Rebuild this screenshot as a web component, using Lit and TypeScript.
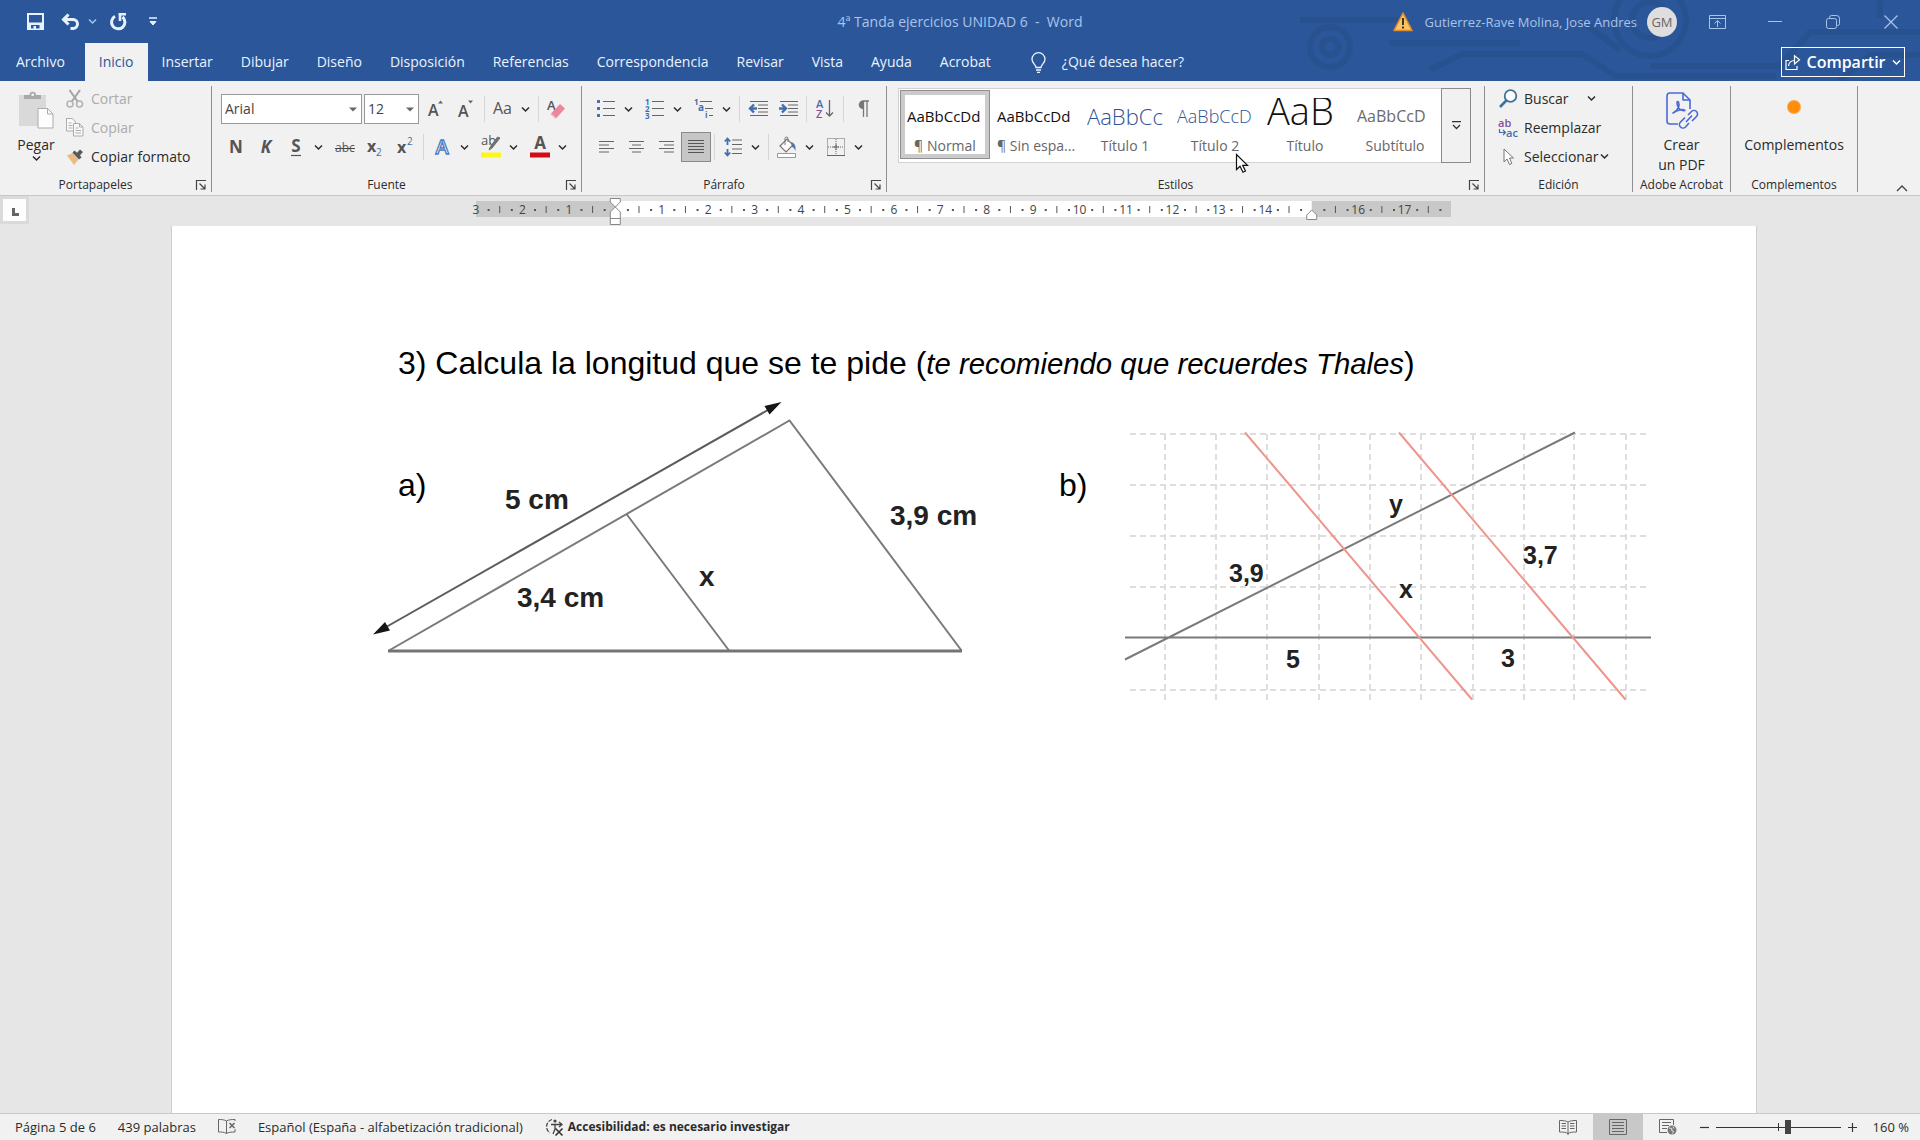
import { LitElement, html, css, svg, nothing, type TemplateResult } from "lit";
import { customElement, property } from "lit/decorators.js";
import { classMap } from "lit/directives/class-map.js";

const CHEVRON = svg`<path d="M1 1.500 4.500 5 8 1.500" fill="none" stroke="currentColor" stroke-width="1.500"/>`;

/** Icon artwork: [width, height, drawing]. */
const ICONS: Record<string, [number, number, unknown]> = {
  chevron: [9, 7, CHEVRON],
  save: [17, 17, svg`<path fill="currentColor" fill-rule="evenodd" d="M0 0h17v17H0zM2 2v7.500h13V2zM4 12v3.500h2.500V13H9v2.500h3.500V12z"/>`],
  undo: [19, 16, svg`<path d="M3 5.500h9a4.500 4.500 0 0 1 0 9H9.500" fill="none" stroke="currentColor" stroke-width="3"/><path d="M7.500.5 2.500 5.500l5 5" fill="none" stroke="currentColor" stroke-width="3"/>`],
  redo: [19, 18, svg`<path d="M6 3.300A6.700 6.700 0 1 0 13.500 4" fill="none" stroke="currentColor" stroke-width="3"/><path d="M9.500 1.200H17M11 0v8" fill="none" stroke="currentColor" stroke-width="2.600"/>`],
  custom: [8, 9, svg`<path d="M0 1h8" stroke="currentColor" stroke-width="1.500"/><path d="M1 4.500h6L4 8z" fill="currentColor" stroke="currentColor"/>`],
  warning: [20, 20, svg`<path d="M10 1 19 18.500H1z" fill="#f6c667" stroke="#e08a2c" stroke-width="1.600" stroke-linejoin="round"/><path d="M10 6v7M10 14.500v2" stroke="#4a3212" stroke-width="2"/>`],
  ribbonOpts: [17, 14, svg`<path d="M.5.5h16v13H.5zM.5 3.500h16M8.500 12V6M5.500 8.500l3-3 3 3" fill="none" stroke="currentColor"/>`],
  minimize: [14, 14, svg`<path d="M0 6.500h14" stroke="currentColor"/>`],
  restore: [14, 14, svg`<rect x=".5" y="3.500" width="10" height="10" rx="2" fill="none" stroke="currentColor"/><path d="M3.500 3V2.500a2 2 0 0 1 2-2h5a3 3 0 0 1 3 3v5a2 2 0 0 1-2 2H11" fill="none" stroke="currentColor"/>`],
  close: [14, 14, svg`<path d="m.5.5 13 13m0-13-13 13" stroke="currentColor" stroke-width="1.200"/>`],
  bulb: [15, 21, svg`<path d="M5 15.500c0-3-4-4-4-8.300a6.500 6.500 0 0 1 13 0c0 4.300-4 5.300-4 8.300zM5 18h5M6 20.300h3" fill="none" stroke="currentColor" stroke-width="1.300"/>`],
  share: [15, 15, svg`<path d="M4 5.500H1v9h11v-3.500M3.500 11c.5-4 2.800-5.500 6-5.500M9.500 2v3L9.500 9l5-4.300L9.500.7z" fill="none" stroke="currentColor" stroke-width="1.200"/>`],
  paste: [36, 40, svg`<path d="M1 5h27v31H1z" fill="#d9d9d9"/><path d="M6 9V5h5.500a3.200 3.200 0 0 1 6.500 0H23v4z" fill="#a9a9a9"/><circle cx="14.700" cy="4.800" r="1.400" fill="#f1f1f1"/><path d="M20 18.500h9.500l5.500 5.500v14H20z" fill="#fdfdfd" stroke="#ababab"/><path d="M29.500 18.500V24H35" fill="none" stroke="#ababab"/>`],
  cut: [18, 18, svg`<path d="M3.500 0 12 12M14 0 5.500 12" stroke="#a3a3a3" stroke-width="2"/><circle cx="4" cy="14" r="3" fill="none" stroke="#b4b4b4" stroke-width="1.600"/><circle cx="13.500" cy="14" r="3" fill="none" stroke="#b4b4b4" stroke-width="1.600"/>`],
  copy: [18, 19, svg`<path d="M.5.500h6L9.500 4v9h-9z" fill="#fafafa" stroke="#ababab"/><path d="M2.500 5h3m-3 2.500h4m-4 2.500h4" stroke="#ababab"/><path d="M7.500 5.500h6l3.500 3.500v9H7.500z" fill="#fafafa" stroke="#ababab"/><path d="M13.500 5.500V9H17M9.500 10h3m-3 2.500h5.500M9.500 15H15" fill="none" stroke="#ababab"/>`],
  painter: [18, 18, svg`<path d="m1 7.500 6-2.500 5.500 6.500L8 17z" fill="#e9bd82"/><path d="m6.500 4.500 2-2 2.500 2.300L14 1.500 17 4l-3 3.200 1.500 2.300-2.500 2z" fill="#595959"/>`],
  grow: [18, 18, svg`<text x="1" y="16" class="t16 bold">A</text><path d="m11 3.500 2.500-3 2.500 3z" fill="#666"/>`],
  shrink: [18, 18, svg`<text x="1" y="17" class="t16 bold">A</text><path d="m11 .5 2.500 3 2.500-3z" fill="#666"/>`],
  case: [20, 18, svg`<text x="0" y="14" class="t16">Aa</text>`],
  clear: [20, 22, svg`<text x="0" y="12" class="t13 bold">A</text><path d="m4 15.500 9-9.500 5 4.500-9 10z" fill="#e9879b"/><path d="m3.700 16 5 4.500" stroke="#f6c1cb" stroke-width="1.500"/>`],
  boldN: [18, 18, svg`<text x="9" y="15" text-anchor="middle" class="t17 heavy">N</text>`],
  italicK: [18, 18, svg`<text x="9" y="15" text-anchor="middle" class="t17 heavy slant">K</text>`],
  underS: [18, 20, svg`<text x="9" y="15" text-anchor="middle" class="t17 heavy">S</text><path d="M4 18.500h10" stroke="#555" stroke-width="1.200"/>`],
  strike: [22, 18, svg`<text x="11" y="14" text-anchor="middle" class="t12">abc</text><path d="M1 10.500h20" stroke="#444"/>`],
  sub: [20, 20, svg`<text x="2" y="15" class="t16 heavy">x</text><text x="11" y="19" class="t10 blue">2</text>`],
  sup: [20, 20, svg`<text x="2" y="16" class="t16 heavy">x</text><text x="12" y="8" class="t10 blue">2</text>`],
  effects: [20, 20, svg`<text x="10" y="17" text-anchor="middle" class="outline">A</text>`],
  highlight: [22, 24, svg`<text x="1" y="10" class="t13">ab</text><path d="m20 3-8 10-3 2 1.500-3.500L17.500 2z" fill="#707070" stroke="#707070"/><path d="M1 17.500h20v5H1z" fill="#fbf61c"/>`],
  fontColor: [22, 24, svg`<text x="11" y="14" text-anchor="middle" class="t17 heavy">A</text><path d="M1 17.500h20v5H1z" fill="#d30d17"/>`],
  bullets: [20, 20, svg`<path d="M1 1h3v3H1zM1 8h3v3H1zM1 15h3v3H1z" fill="#4472b4"/><path d="M7 2.500h12M7 9.500h12M7 16.500h12" stroke="#666"/>`],
  numbers: [20, 20, svg`<g class="t8 blue"><text x="0" y="6">1</text><text x="0" y="13">2</text><text x="0" y="20">3</text></g><path d="M7 2.500h12M7 9.500h12M7 16.500h12" stroke="#666"/>`],
  multilevel: [20, 20, svg`<g class="t8 blue"><text x="0" y="6">1</text><text x="4" y="12" class="t10">a</text><text x="11" y="19">i</text></g><path d="M6 2.500h12M11 9.500h8M15 16.500h4" stroke="#666"/>`],
  outdent: [19, 18, svg`<path d="M1 1.500h18M9 5h10M9 8.500h10M9 12h10M1 15.500h18" stroke="#666"/><path d="M1 8.500h7M5 4.500 1 8.500l4 4" fill="none" stroke="#3f6fb0" stroke-width="2.400"/>`],
  indent: [19, 18, svg`<path d="M1 1.500h18M9 5h10M9 8.500h10M9 12h10M1 15.500h18" stroke="#666"/><path d="M0 8.500h7M3 4.500l4 4-4 4" fill="none" stroke="#3f6fb0" stroke-width="2.400"/>`],
  sort: [18, 20, svg`<text x="0" y="9" class="t11 bold blue">A</text><text x="0" y="19" class="t11 bold purple">Z</text><path d="M13.500 1v16M10 13.500l3.500 3.500 3.500-3.500" fill="none" stroke="#666" stroke-width="1.300"/>`],
  pilcrow: [13, 18, svg`<path d="M6.500 1H13M7.500 1v16M11 1v16" stroke="#777" stroke-width="1.300"/><path d="M7 .4a4 4 0 0 0 0 8.600z" fill="#777"/>`],
  left: [15, 14, svg`<path d="M0 1.500h15M0 5h10M0 8.500h15M0 12h10" stroke="#666"/>`],
  center: [15, 14, svg`<path d="M0 1.500h15M3 5h9M0 8.500h15M3 12h9" stroke="#666"/>`],
  right: [15, 14, svg`<path d="M0 1.500h15M5 5h10M0 8.500h15M5 12h10" stroke="#666"/>`],
  justify: [16, 14, svg`<path d="M0 .5h16M0 3.500h16M0 6.500h16M0 9.500h16M0 12.500h16" stroke="#555"/>`],
  spacing: [18, 20, svg`<path d="M3.500 2v6M.8 4.500 3.500 1.500l2.700 3M3.500 12v6M.8 15.500l2.700 3 2.700-3" fill="none" stroke="#3f6fb0" stroke-width="1.800"/><path d="M8 3h10M8 7.500h10M8 12h10M8 16.500h10" stroke="#666"/>`],
  bucket: [20, 21, svg`<path d="m3 9 7-7 6 6-7 7z" fill="#fdfdfd" stroke="#777" stroke-width="1.200"/><path d="M8 8V1.500a1.500 1.500 0 0 1 3 0V5" fill="none" stroke="#777"/><path d="M14 5c4 1 5 4 4.500 9-1-2.500-2-3.500-3.500-4z" fill="#56789f"/><path d="M.5 16.500h18v4H.5z" fill="#fff" stroke="#999"/>`],
  borders: [18, 18, svg`<path d="M.5.5h17v17H.5zM9 1v16M1 9h16" fill="none" stroke="#666" stroke-dasharray="1 1"/><path d="M9 6v6M6 9h6M0 17.500h18" stroke="#666"/>`],
  search: [19, 19, svg`<circle cx="11.500" cy="7" r="5.800" fill="#fbfdff" stroke="#3e7397" stroke-width="1.800"/><path d="M7.300 11.500 1 18" stroke="#3e7397" stroke-width="2.600"/>`],
  replace: [20, 20, svg`<text x="0" y="9" class="t11 bold purple">ab</text><text x="8" y="19" class="t11 bold blue">ac</text><path d="M1.500 11v3.500H7M5 12l2.500 2.500L5 17" fill="none" stroke="#3f6fb0" stroke-width="1.200"/>`],
  select: [14, 18, svg`<path d="M3 1v13l3-3 2.500 5.500 2.300-1L8.500 10h4z" fill="#fff" stroke="#777"/>`],
  pdf: [32, 38, svg`<g fill="none" stroke="#4a69d6" stroke-width="1.600" stroke-linejoin="round"><path d="M12 32H4a3 3 0 0 1-3-3V4a3 3 0 0 1 3-3h13l7 7v9"/><path d="M17 1v7h7"/><path d="M7 21c5-2 7-8 5.500-11-1.200-1.500-2 .5-1 3.500 1.500 4 4.500 5.500 7.500 5-2-1.800-8-.5-12 2.500z"/><path d="m22 23 3.500-3.500a3.400 3.400 0 0 1 5 5L26 29m-3 2-3.500 4a3.400 3.400 0 0 1-5-5l4.500-4.500m1 4.500 6-6.500"/></g>`],
  dot: [16, 16, svg`<circle cx="8" cy="8" r="7" fill="#f9a94a"/><circle cx="8" cy="8" r="6" fill="#ff8f0a"/>`],
  launcher: [10, 10, svg`<path d="M.5 10V.5H10M3.500 3.500l5 5M9 4.500V9H4.500" fill="none" stroke="#444" stroke-width="1.200"/>`],
  more: [9, 9, svg`<path d="M0 .7h9M1 4l3.500 3.500L8 4" fill="none" stroke="#333" stroke-width="1.300"/>`],
  collapse: [12, 8, svg`<path d="m1 7 5-5 5 5" fill="none" stroke="#444" stroke-width="1.400"/>`],
  tabstop: [7, 8, svg`<path d="M1.500 0v6.500H7" fill="none" stroke="#666" stroke-width="3"/>`],
  proof: [18, 16, svg`<path d="M8.500 14.500V2C6 .5 3 .5.500.500v12.500c3 0 5.500 0 8 1.500zm0 0c2-1.200 4-1.500 8.500-1.500V10M8.500 2C11 .5 14 .5 17 .5V2" fill="none" stroke="#666"/><path d="m11.500 4 5 5m0-5-5 5" stroke="#666" stroke-width="1.500"/>`],
  access: [20, 18, svg`<path d="M7 1.500A7.500 7.500 0 0 0 5 15" fill="none" stroke="#444" stroke-width="1.300" stroke-dasharray="4 1.500"/><circle cx="10" cy="3" r="1.600" fill="#444"/><path d="M6 6.500h11M10 6v5l-2 5M14 4l3 2.500L14 9" fill="none" stroke="#444" stroke-width="1.300"/><path d="m10.500 10.500 7 7m0-7-7 7" stroke="#333" stroke-width="1.600"/>`],
  read: [18, 15, svg`<path d="M9 13.500V2C7 .8 4 .5.500.5V12c4 0 6.500.3 8.500 1.500zm0 0c2-1.200 4.500-1.500 8.500-1.500V.5C14 .5 11 .8 9 2M9 13v2M2.500 3.500H7M2.500 6H7M2.500 8.500H7M11 3.500h4.500M11 6h4.500M11 8.500h4.500" fill="none" stroke="#666"/>`],
  print: [18, 16, svg`<path d="M.5.5h17v15H.5zM3 3.500h12M3 6.500h12M3 9.500h12M3 12.500h12" fill="none" stroke="#666"/>`],
  web: [18, 16, svg`<path d="M8 13.500H.5V.5h14V6M3 3.500h9M3 6.500h7M3 9.500h5" fill="none" stroke="#666"/><circle cx="13" cy="11" r="4.500" fill="#777"/><path d="m10 9 3 .5-.5 2 2 .5-1 2.500M14 7.500l1 2" fill="none" stroke="#ddd"/>`],
  minus: [9, 9, svg`<path d="M0 4.500h9" stroke="#333" stroke-width="1.200"/>`],
  plus: [9, 9, svg`<path d="M0 4.500h9M4.500 0v9" stroke="#333" stroke-width="1.200"/>`],
};

const icon = (name: string): TemplateResult => {
  const [w, h, art] = ICONS[name];
  return html`<svg class="icon" width=${w} height=${h} viewBox="0 0 ${w} ${h}" aria-hidden="true">${art}</svg>`;
};

const base = css`
  :host {
    box-sizing: border-box;
    font-family: "Open Sans", "Noto Sans", sans-serif;
    font-size: 14px;
    line-height: 20px;
    color: #2b2b2b;
  }
  *, *::before, *::after { box-sizing: inherit; }
  button {
    font: inherit;
    color: inherit;
    background: none;
    border: 0;
    padding: 0;
    display: inline-flex;
    align-items: center;
    justify-content: center;
    white-space: nowrap;
  }
  .icon { display: block; flex: none; overflow: visible; }
  svg text { fill: #555; }
  .t8 { font-size: 8px; font-weight: 700; }
  .t10 { font-size: 10px; }
  .t11 { font-size: 11px; }
  .t12 { font-size: 12px; }
  .t13 { font-size: 13px; }
  .t16 { font-size: 16px; }
  .t17 { font-size: 17px; }
  .bold { font-weight: 600; }
  .heavy { font-weight: 700; }
  .slant { font-style: italic; }
  svg text.blue, .blue text { fill: #3f6fb0; }
  svg text.purple { fill: #8250a0; }
  svg text.outline { font-size: 20px; font-weight: 600; fill: #fff; stroke: #4a7dc2; stroke-width: 1.300px; }
`;

@customElement("word-title-bar")
export class WordTitleBar extends LitElement {
  static styles = [base, css`
    :host {
      display: block;
      position: relative;
      background: #2b579a;
      color: #fff;
    }
    .decor { position: absolute; right: 0; top: 0; width: 640px; height: 100%; }
    .decor path, .decor circle { fill: none; stroke: #264c86; stroke-width: 6; opacity: .5; }
    .top {
      position: relative;
      display: grid;
      grid-template-columns: 1fr auto 1fr;
      align-items: center;
      height: 43px;
      color: #a9c4ea;
    }
    .quick { display: flex; align-items: center; padding-left: 17px; color: #e6f3ff; }
    .quick button { height: 32px; width: 34px; }
    .quick .narrow { width: 10px; color: #a9c4ea; margin-right: 4px; }
    .quick .wide { width: 36px; }
    .title { white-space: pre; }
    .account { display: flex; align-items: center; justify-content: flex-end; }
    .user { font-size: 13px; margin: 0 10px 0 12px; }
    .avatar {
      width: 30px;
      height: 30px;
      border-radius: 50%;
      background: #dedede;
      color: #666;
      font-size: 13px;
      margin-right: 11px;
    }
    .win { width: 58px; height: 38px; }
    .tabs { position: relative; display: flex; align-items: center; height: 38px; padding: 0 15px 0 2px; }
    .tab { height: 38px; padding: 0 14px; color: #eaf3ff; }
    .tab.first { padding-right: 20px; }
    .tab.active { background: #f1f1f1; color: #2b579a; }
    .ask { gap: 16px; margin-left: 26px; color: #eaf3ff; }
    .share {
      margin-left: auto;
      width: 124px;
      height: 30px;
      gap: 6px;
      border: 1px solid #fff;
      font-size: 16px;
      font-weight: 600;
    }
  `];

  private tabs = ["Archivo", "Inicio", "Insertar", "Dibujar", "Diseño", "Disposición", "Referencias",
    "Correspondencia", "Revisar", "Vista", "Ayuda", "Acrobat"];

  render() {
    return html`
      <svg class="decor" viewBox="0 0 640 81" preserveAspectRatio="xMaxYMin slice" aria-hidden="true">
        <circle cx="50" cy="47" r="20"/><circle cx="50" cy="47" r="8"/>
        <path d="M20 20h105M110 43h130M150 70l32-16h120l34 22h160M300 20l40 30"/>
        <circle cx="370" cy="20" r="36"/><circle cx="370" cy="20" r="18"/>
        <path d="M370 66h130l30-34h110M560 81l30-26h50M600 0v18"/>
      </svg>
      <div class="top">
        <div class="quick">
          <button class="wide" aria-label="Guardar">${icon("save")}</button>
          <button aria-label="Deshacer">${icon("undo")}</button>
          <button class="narrow" aria-label="Opciones de deshacer">${icon("chevron")}</button>
          <button aria-label="Rehacer">${icon("redo")}</button>
          <button class="wide" aria-label="Personalizar barra">${icon("custom")}</button>
        </div>
        <div class="title">4ª Tanda ejercicios UNIDAD 6  -  Word</div>
        <div class="account">
          ${icon("warning")}
          <span class="user">Gutierrez-Rave Molina, Jose Andres</span>
          <button class="avatar">GM</button>
          <button class="win" aria-label="Opciones de la cinta">${icon("ribbonOpts")}</button>
          <button class="win" aria-label="Minimizar">${icon("minimize")}</button>
          <button class="win" aria-label="Restaurar">${icon("restore")}</button>
          <button class="win" aria-label="Cerrar">${icon("close")}</button>
        </div>
      </div>
      <nav class="tabs">
        ${this.tabs.map((t, i) => html`<button class=${classMap({ tab: true, first: i === 0, active: i === 1 })}>${t}</button>`)}
        <button class="ask">${icon("bulb")}<span>¿Qué desea hacer?</span></button>
        <button class="share">${icon("share")}<span>Compartir</span>${icon("chevron")}</button>
      </nav>`;
  }
}

@customElement("ribbon-group")
export class RibbonGroup extends LitElement {
  @property() label = "";
  @property({ type: Boolean }) launcher = false;

  static styles = [base, css`
    :host {
      display: flex;
      flex-direction: column;
      border-right: 1px solid #8f8f8f;
      min-height: 106px;
    }
    .body { flex: 1; }
    .foot { display: flex; align-items: center; font-size: 12px; line-height: 14px; }
    .label { flex: 1; text-align: center; white-space: nowrap; }
    .launch { width: 20px; height: 14px; }
  `];

  render() {
    return html`
      <div class="body"><slot></slot></div>
      <div class="foot">
        <span class="label">${this.label}</span>
        ${this.launcher ? html`<button class="launch" aria-label="Más opciones de ${this.label}">${icon("launcher")}</button>` : nothing}
      </div>`;
  }
}

interface StyleItem { name: string; sample: string; look: string }

@customElement("word-ribbon")
export class WordRibbon extends LitElement {
  static styles = [base, css`
    :host {
      display: flex;
      background: #f1f1f1;
      border-bottom: 1px solid #c8c8c8;
      padding: 5px 0 3px;
    }
    .g-clip { width: 212px; }
    .g-font { width: 370px; }
    .g-par { width: 305px; }
    .g-styles { flex: 1; min-width: 0; }
    .g-edit { width: 148px; }
    .g-pdf { width: 98px; }
    .g-add { width: 127px; }
    .clip { display: flex; padding: 4px 0 0 12px; gap: 5px; }
    .big { flex-direction: column; justify-content: flex-start; width: 48px; }
    .big .icon { margin-bottom: 5px; }
    .list { display: flex; flex-direction: column; align-items: flex-start; margin-top: -6px; }
    .list button { height: 29px; gap: 6px; }
    .slot { width: 20px; display: flex; justify-content: center; }
    .off { color: #ababab; }
    .tools { display: flex; flex-direction: column; gap: 8px; padding: 8px 0 0 9px; }
    .row { display: flex; align-items: center; height: 30px; }
    .row button { height: 30px; width: 30px; }
    .row button.drop { width: 14px; }
    .row button.on { background: #c6c6c6; border: 1px solid #8a8a8a; }
    .split { display: flex; margin-right: 5px; }
    .split.last { margin-right: 0; }
    .sep { width: 1px; height: 26px; background: #d6d6d6; margin: 0 3px; }
    .sep.far { margin-left: 6px; }
    .combo { display: grid; align-items: center; margin-right: 2px; }
    .combo select, .combo .arrow { grid-area: 1 / 1; }
    .combo select {
      appearance: none;
      font: inherit;
      color: #444;
      height: 30px;
      padding: 0 3px;
      border: 1px solid #9a9a9a;
      border-radius: 0;
      background: #fff;
    }
    .face { width: 141px; }
    .size { width: 55px; }
    .arrow { justify-self: end; margin-right: 5px; pointer-events: none; }
    .gallery { display: flex; margin: 2px 13px 0 11px; height: 75px; }
    .items { display: flex; flex: 1; overflow: hidden; background: #fff; border: 1px solid #d2d2d2; border-right: 0; padding: 1px; }
    .item {
      display: block;
      width: 90px;
      height: 69px;
      padding: 5px 7px 0;
      flex: none;
      color: #666;
      text-align: center;
    }
    .item.sel { box-shadow: inset 0 0 0 1px #8f8f8f, inset 0 0 0 5px #cbcbcb; }
    .item .name { display: block; line-height: 20px; margin-top: 8px; }
    .sample { display: block; height: 30px; overflow: hidden; line-height: 36px; text-align: left; font-size: 15px; color: #111; }
    .sample.h1 { font-size: 22px; font-weight: 300; color: #2f5496; }
    .sample.h2 { font-size: 18px; font-weight: 300; color: #2f5496; }
    .sample.title { font-size: 38px; font-weight: 300; line-height: 24px; }
    .sample.subtitle { font-size: 16px; color: #6a6a6a; }
    .more { width: 30px; border: 1px solid #8a8a8a; }
    .edit { padding: 4px 0 0 13px; }
    .edit .far { margin-left: 12px; }
    .edit .near { margin-left: -4px; }
    .center { display: flex; justify-content: center; padding-top: 6px; }
    .two { line-height: 20px; }
    .dotwrap { height: 38px; display: flex; padding-top: 7px; margin-bottom: 5px; }
    .end { flex: none; width: 62px; display: flex; align-items: flex-end; justify-content: flex-end; padding: 0 12px 0 0; }
  `];

  private styleItems: StyleItem[] = [
    { name: "¶ Normal", sample: "AaBbCcDd", look: "" },
    { name: "¶ Sin espa...", sample: "AaBbCcDd", look: "" },
    { name: "Título 1", sample: "AaBbCc", look: "h1" },
    { name: "Título 2", sample: "AaBbCcD", look: "h2" },
    { name: "Título", sample: "AaB", look: "title" },
    { name: "Subtítulo", sample: "AaBbCcD", look: "subtitle" },
  ];

  private btn(name: string, label: string, on = false) {
    return html`<button class=${classMap({ on })} aria-label=${label}>${icon(name)}</button>`;
  }

  private split(name: string, label: string, last = false) {
    return html`<span class=${classMap({ split: true, last })}>${this.btn(name, label)}<button class="drop" aria-label="Opciones de ${label}">${icon("chevron")}</button></span>`;
  }

  private combo(cls: string, label: string, value: string) {
    return html`<span class="combo"><select class=${cls} aria-label=${label}><option>${value}</option></select>
      <svg class="arrow" width="8" height="5" viewBox="0 0 8 5" aria-hidden="true"><path d="M0 .5h8l-4 4z" fill="#666"/></svg></span>`;
  }

  render() {
    const sep = html`<span class="sep"></span>`;
    const far = html`<span class="sep far"></span>`;
    return html`
      <ribbon-group class="g-clip" label="Portapapeles" launcher>
        <div class="clip">
          <button class="big">${icon("paste")}<span>Pegar</span>${icon("chevron")}</button>
          <div class="list">
            <button class="off"><span class="slot">${icon("cut")}</span>Cortar</button>
            <button class="off"><span class="slot">${icon("copy")}</span>Copiar</button>
            <button><span class="slot">${icon("painter")}</span>Copiar formato</button>
          </div>
        </div>
      </ribbon-group>

      <ribbon-group class="g-font" label="Fuente" launcher>
        <div class="tools">
          <div class="row">
            ${this.combo("face", "Fuente", "Arial")}${this.combo("size", "Tamaño de fuente", "12")}
            ${this.btn("grow", "Aumentar tamaño")}${this.btn("shrink", "Disminuir tamaño")}${sep}
            ${this.split("case", "Cambiar mayúsculas", true)}${far}${this.btn("clear", "Borrar formato")}
          </div>
          <div class="row">
            ${this.btn("boldN", "Negrita")}${this.btn("italicK", "Cursiva")}${this.split("underS", "Subrayado")}
            ${this.btn("strike", "Tachado")}${this.btn("sub", "Subíndice")}${this.btn("sup", "Superíndice")}${sep}
            ${this.split("effects", "Efectos de texto")}${this.split("highlight", "Resaltado")}${this.split("fontColor", "Color de fuente")}
          </div>
        </div>
      </ribbon-group>

      <ribbon-group class="g-par" label="Párrafo" launcher>
        <div class="tools">
          <div class="row">
            ${this.split("bullets", "Viñetas")}${this.split("numbers", "Numeración")}${this.split("multilevel", "Lista multinivel", true)}${far}
            ${this.btn("outdent", "Disminuir sangría")}${this.btn("indent", "Aumentar sangría")}${sep}
            ${this.btn("sort", "Ordenar")}${sep}${this.btn("pilcrow", "Mostrar todo")}
          </div>
          <div class="row">
            ${this.btn("left", "Alinear a la izquierda")}${this.btn("center", "Centrar")}${this.btn("right", "Alinear a la derecha")}
            ${this.btn("justify", "Justificar", true)}${sep}${this.split("spacing", "Interlineado", true)}${far}
            ${this.split("bucket", "Sombreado")}${this.split("borders", "Bordes")}
          </div>
        </div>
      </ribbon-group>

      <ribbon-group class="g-styles" label="Estilos" launcher>
        <div class="gallery">
          <div class="items">
            ${this.styleItems.map((s, i) => html`
              <button class=${classMap({ item: true, sel: i === 0 })}>
                <span class="sample ${s.look}">${s.sample}</span><span class="name">${s.name}</span>
              </button>`)}
          </div>
          <button class="more" aria-label="Más estilos">${icon("more")}</button>
        </div>
      </ribbon-group>

      <ribbon-group class="g-edit" label="Edición">
        <div class="edit list">
          <button><span class="slot">${icon("search")}</span>Buscar<span class="far">${icon("chevron")}</span></button>
          <button><span class="slot">${icon("replace")}</span>Reemplazar</button>
          <button><span class="slot">${icon("select")}</span>Seleccionar<span class="near">${icon("chevron")}</span></button>
        </div>
      </ribbon-group>

      <ribbon-group class="g-pdf" label="Adobe Acrobat">
        <div class="center"><button class="big">${icon("pdf")}<span class="two">Crear<br>un PDF</span></button></div>
      </ribbon-group>

      <ribbon-group class="g-add" label="Complementos">
        <div class="center"><button class="big"><span class="dotwrap">${icon("dot")}</span><span>Complementos</span></button></div>
      </ribbon-group>

      <div class="end"><button aria-label="Contraer la cinta">${icon("collapse")}</button></div>`;
  }
}

@customElement("word-ruler")
export class WordRuler extends LitElement {
  static styles = [base, css`
    :host {
      display: grid;
      grid-template-columns: 1fr minmax(0, 975px) 1fr;
      align-items: start;
      height: 30px;
      background: #e6e6e6;
    }
    .corner { width: 29px; height: 28px; padding: 3px; background: #dadada; }
    .corner button { width: 100%; height: 100%; background: #fdfdfd; padding: 4px 0 0 1px; }
    .scale { display: block; width: 100%; height: 30px; overflow: visible; margin-left: 3px; }
    .scale text { font-size: 12px; fill: #444; }
  `];

  render() {
    const total = 21;
    const origin = 3;
    const pct = (cm: number) => `${(cm / total) * 100}%`;
    const marks: unknown[] = [];
    for (let q = 1; q < total * 4; q++) {
      const cm = q / 4;
      if (q % 4 === 2) marks.push(svg`<rect x=${pct(cm)} y="10" width="1" height="7" fill="#555"/>`);
      else if (q % 4) marks.push(svg`<rect x=${pct(cm)} y="13" width="2" height="2" fill="#555"/>`);
    }
    for (let cm = 0; cm < total; cm++) {
      const n = cm - origin;
      if (n !== 0 && n !== 15) marks.push(svg`<text x=${pct(cm)} y="18" text-anchor="middle">${Math.abs(n)}</text>`);
    }
    return html`
      <div class="corner"><button aria-label="Tipo de tabulación">${icon("tabstop")}</button></div>
      <svg class="scale" role="img" aria-label="Regla horizontal">
        <rect x="0" y="5" width="100%" height="16" fill="#c8c8c8"/>
        <rect x=${pct(origin)} y="5" width=${pct(15)} height="16" fill="#fff"/>
        ${marks}
        <svg x=${pct(origin)} overflow="visible">
          <g fill="#fff" stroke="#888">
            <path d="M-5 2.500H5v3.500l-5 5-5-5zM0 11l5 5v6.500H-5V16zM-5 22.500H5v6H-5z"/>
          </g>
        </svg>
        <svg x=${pct(18)} overflow="visible"><path d="m0 14 5 5v4.500H-5V19z" fill="#fff" stroke="#888"/></svg>
      </svg>
      <span></span>`;
  }
}

@customElement("word-page")
export class WordPage extends LitElement {
  static styles = [base, css`
    :host {
      display: flex;
      justify-content: center;
      flex: 1;
      background: #e6e6e6;
      padding-left: 8px;
    }
    .page {
      width: 100%;
      max-width: 1586px;
      background: #fff;
      border: solid #cfcfcf;
      border-width: 0 1px;
      padding: 119px 104px 0 226px;
      font-family: "Liberation Sans", Arial, sans-serif;
      font-size: 24pt;
      line-height: 37px;
      color: #000;
    }
    h1 { font: inherit; margin: 0; }
    em { font-size: 22pt; }
    .figures { display: grid; grid-template-columns: minmax(0, 661px) minmax(0, 65px) minmax(0, 528px); align-items: start; }
    .tag { margin: 85px 0 0; grid-row: 1; }
    .tag.a { grid-column: 1; }
    .tag.b { grid-column: 2; }
    .fig { display: block; grid-row: 1; width: 100%; height: auto; }
    .fig.a { grid-column: 1; max-width: 606px; margin: 18px 0 0 -25px; }
    .fig.b { grid-column: 3; margin-top: 48px; }
    .fig text { font-weight: 700; fill: #222; }
    .fig.a text { font-size: 28px; }
    .fig.b text { font-size: 25px; }
    .ink { fill: none; stroke: #7a7a7a; stroke-width: 2; }
    .dim { fill: none; stroke: #5c5c5c; stroke-width: 2; }
    .head { fill: #161616; }
    .base { fill: none; stroke: #747474; stroke-width: 3; }
    .grid { fill: none; stroke: #dedede; stroke-width: 2; stroke-dasharray: 6 4; }
    .red { fill: none; stroke: #ee968c; stroke-width: 2; }
  `];

  render() {
    const columns = [1165, 1216, 1267, 1319, 1370, 1421, 1473, 1524, 1574, 1626];
    const rows = [434, 485, 536, 587, 690];
    return html`
      <article class="page">
        <h1>3) Calcula la longitud que se te pide (<em>te recomiendo que recuerdes Thales</em>)</h1>
        <div class="figures">
          <p class="tag a">a)</p>
          <svg class="fig a" viewBox="373 400 606 256" role="img" aria-label="Triángulo a">
            <path class="dim" d="M380 630.500 775 406"/>
            <path class="head" d="m373 634.500 12-12.500 5 8.500zM781.500 402l-12 12.500-5-8.500z"/>
            <path class="ink" d="M389 650.500 789.500 420.500 961.500 650.500M626.500 514 729 650.500"/>
            <path class="base" d="M388 651h574"/>
            <text x="505" y="509">5 cm</text>
            <text x="890" y="525">3,9 cm</text>
            <text x="517" y="607">3,4 cm</text>
            <text x="699" y="586">x</text>
          </svg>
          <p class="tag b">b)</p>
          <svg class="fig b" viewBox="1124 430 528 271" role="img" aria-label="Rectas b">
            ${columns.map((x) => svg`<path class="grid" d="M${x} 434V700"/>`)}
            ${rows.map((y) => svg`<path class="grid" d="M1130 ${y}H1650"/>`)}
            <path class="ink" d="M1125 637.500H1651M1125 659.500 1575 432.500"/>
            <path class="red" d="M1245 432.500 1472 699.500M1399 432.500 1625.500 699.500"/>
            <text x="1389" y="513">y</text>
            <text x="1229" y="582">3,9</text>
            <text x="1399" y="598">x</text>
            <text x="1523" y="564">3,7</text>
            <text x="1286" y="668">5</text>
            <text x="1501" y="667">3</text>
          </svg>
        </div>
      </article>`;
  }
}

@customElement("word-status-bar")
export class WordStatusBar extends LitElement {
  static styles = [base, css`
    :host {
      display: flex;
      align-items: center;
      justify-content: space-between;
      height: 27px;
      background: #f1f1f1;
      border-top: 1px solid #c8c8c8;
      font-size: 13px;
    }
    .side { display: flex; align-items: center; height: 100%; }
    .info { gap: 22px; padding-left: 15px; }
    .acc { gap: 3px; font-size: 12px; font-weight: 700; }
    .view { width: 50px; height: 100%; }
    .view.on { background: #c8c8c8; }
    .step { width: 23px; height: 100%; }
    .pct { margin: 0 11px 0 9px; }
    input {
      appearance: none;
      width: 125px;
      height: 14px;
      margin: 0;
      background:
        linear-gradient(#333, #333) center / 1px 8px no-repeat,
        linear-gradient(#333, #333) center / 100% 1px no-repeat;
    }
    input::-webkit-slider-thumb { appearance: none; width: 6px; height: 14px; background: #444; }
  `];

  render() {
    return html`
      <div class="side info">
        <button>Página 5 de 6</button>
        <button>439 palabras</button>
        <button aria-label="Revisión">${icon("proof")}</button>
        <button>Español (España - alfabetización tradicional)</button>
        <button class="acc">${icon("access")}Accesibilidad: es necesario investigar</button>
      </div>
      <div class="side">
        <button class="view" aria-label="Modo de lectura">${icon("read")}</button>
        <button class="view on" aria-label="Diseño de impresión">${icon("print")}</button>
        <button class="view" aria-label="Diseño web">${icon("web")}</button>
        <button class="step" aria-label="Alejar">${icon("minus")}</button>
        <input type="range" min="0" max="100" value="58" aria-label="Zoom">
        <button class="step" aria-label="Acercar">${icon("plus")}</button>
        <span class="pct">160 %</span>
      </div>`;
  }
}

@customElement("app-root")
export class AppRoot extends LitElement {
  static styles = css`
    :host { display: flex; flex-direction: column; min-height: 100vh; position: relative; }
    .pointer { position: absolute; left: 1235px; top: 153px; }
  `;

  render() {
    return html`
      <word-title-bar></word-title-bar>
      <word-ribbon></word-ribbon>
      <word-ruler></word-ruler>
      <word-page></word-page>
      <word-status-bar></word-status-bar>
      <svg class="pointer" width="14" height="21" viewBox="0 0 14 21" aria-hidden="true">
        <path d="M1.500 1.500v15l3.500-3.300 3 6 2.500-1.200-2.800-5.700h4.800z" fill="#fff" stroke="#111" stroke-width="1.200"/>
      </svg>`;
  }
}
